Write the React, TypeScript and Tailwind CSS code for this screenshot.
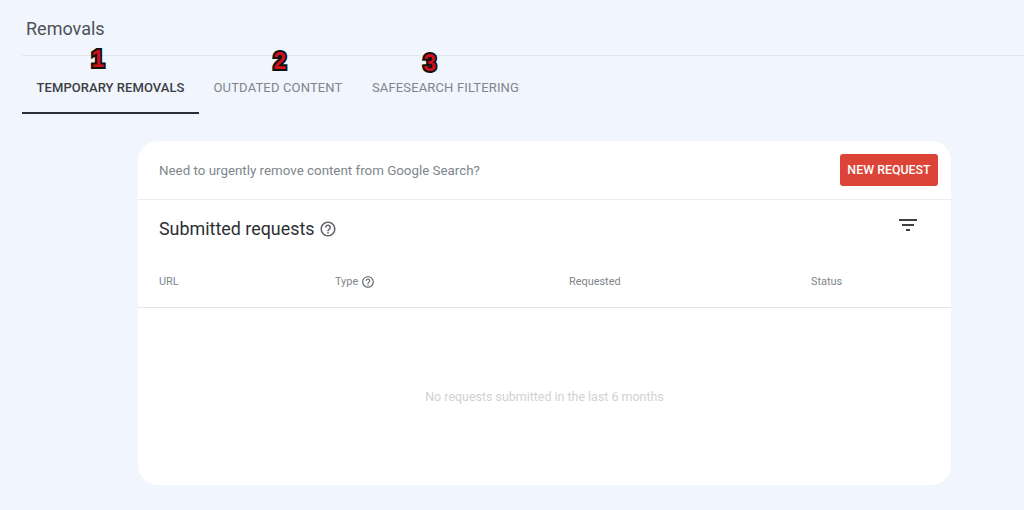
function HelpIcon({ size }: { size: number }) {
  return (
    <svg width={size} height={size} viewBox="0 0 24 24" fill="#5f6368" className="shrink-0">
      <path d="M11 18h2v-2h-2v2zm1-16C6.48 2 2 6.48 2 12s4.48 10 10 10 10-4.48 10-10S17.52 2 12 2zm0 18c-4.41 0-8-3.59-8-8s3.59-8 8-8 8 3.59 8 8-3.59 8-8 8zm0-14c-2.21 0-4 1.79-4 4h2c0-1.1.9-2 2-2s2 .9 2 2c0 2-3 1.75-3 5h2c0-2.25 3-2.5 3-5 0-2.21-1.79-4-4-4z" />
    </svg>
  )
}

function FilterIcon() {
  return (
    <svg width="24" height="24" viewBox="0 0 24 24" fill="#3c4043" className="shrink-0">
      <path d="M10 18h4v-2h-4v2zM3 6v2h18V6H3zm3 7h12v-2H6v2z" />
    </svg>
  )
}

const tabs = [
  { label: 'TEMPORARY REMOVALS', mark: '1', active: true, width: 'w-[177px]', markPos: 'left-[76px] top-[-8px]' },
  { label: 'OUTDATED CONTENT', mark: '2', active: false, width: 'w-[158px]', markPos: 'left-[81px] top-[-6px]' },
  { label: 'SAFESEARCH FILTERING', mark: '3', active: false, width: 'w-[177px]', markPos: 'left-[73px] top-[-4px]' },
]

export default function App() {
  return (
    <div className="w-[1024px] h-[510px] overflow-hidden bg-[#f1f5fd] font-['Roboto',sans-serif]">
      {/* Header */}
      <div className="ml-[22px] h-[56px] border-b border-[#e3e6ea] pl-1 pt-[17px]">
        <h1 className="text-[18px] leading-[24px] text-[#4d5156]">Removals</h1>
      </div>

      {/* Tabs */}
      <div className="ml-[22px] flex h-[58px]">
        {tabs.map((tab) => (
          <div
            key={tab.label}
            className={`relative flex items-center justify-center border-b-2 pt-[7px] ${tab.width} ${
              tab.active ? 'border-[#2b2f33]' : 'border-transparent'
            }`}
          >
            <span className={tab.active ? 'text-[13px] font-medium tracking-[0.05px] text-[#3c4043]' : 'text-[13px] tracking-[0.15px] text-[#80868b]'}>
              {tab.label}
            </span>
            <span
              className={`absolute -translate-x-1/2 text-[23px] leading-[22px] font-bold text-[#d0101a] [-webkit-text-stroke:4px_#111] [paint-order:stroke_fill] font-['Liberation_Sans',sans-serif] ${tab.markPos}`}
            >
              {tab.mark}
            </span>
          </div>
        ))}
      </div>

      {/* Card */}
      <div className="mt-[27px] ml-[138px] h-[344px] w-[813px] rounded-[20px] bg-white">
        <div className="flex h-[59px] items-center justify-between border-b border-[#ebedef] pr-[13px] pl-[21px]">
          <span className="pt-[2px] text-[13.35px] text-[#80868b]">Need to urgently remove content from Google Search?</span>
          <button className="h-[32px] w-[98px] rounded-[3px] bg-[#dc4437] text-[12.4px] font-medium text-white">NEW REQUEST</button>
        </div>

        <div className="flex h-[57px] items-center justify-between pr-[31px] pl-[21px]">
          <div className="flex items-center gap-[4px] pt-[2px]">
            <span className="text-[17.9px] text-[#2b2f33]">Submitted requests</span>
            <HelpIcon size={18} />
          </div>
          <div className="mb-[8px]">
            <FilterIcon />
          </div>
        </div>

        <div className="grid h-[51px] grid-cols-[176px_234px_242px_1fr] items-center border-b border-[#e3e6ea] pl-[21px] text-[10.9px] text-[#80868b]">
          <span>URL</span>
          <span className="flex items-center gap-[3px]">
            Type
            <HelpIcon size={14} />
          </span>
          <span>Requested</span>
          <span>Status</span>
        </div>

        <div className="flex h-[177px] items-center justify-center pt-[2px]">
          <span className="text-[12.45px] text-[#d0d2d4]">No requests submitted in the last 6 months</span>
        </div>
      </div>
    </div>
  )
}
